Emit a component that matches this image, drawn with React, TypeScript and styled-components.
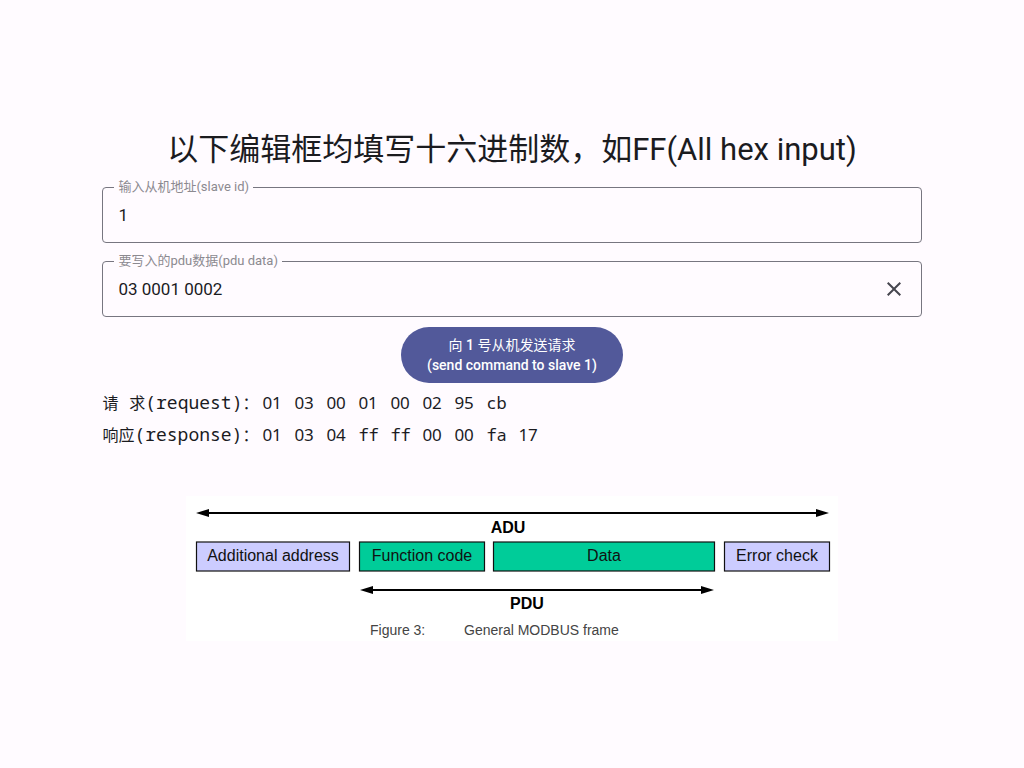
import React, { useState } from "react";
import styled, { createGlobalStyle } from "styled-components";

const GlobalStyle = createGlobalStyle`
  *, *::before, *::after { box-sizing: border-box; }
  body {
    margin: 0;
    background: #fffbff;
    color: #1b1b1f;
    font-family: Roboto, "Noto Sans CJK SC", sans-serif;
  }
`;

const Page = styled.main`
  min-height: 100vh;
  padding: 0 10%;
  display: flex;
  flex-direction: column;
  justify-content: center;
`;

const Title = styled.h1`
  margin: 0 0 6px;
  font-size: 31px;
  line-height: 46px;
  font-weight: 400;
  text-align: center;
`;

const Form = styled.form`
  display: flex;
  flex-direction: column;
  gap: 10px;
`;

const Field = styled.fieldset`
  margin: 0;
  min-width: 0;
  padding: 0 11px 7px;
  border: 1px solid #777680;
  border-radius: 4px;
`;

const Legend = styled.legend`
  padding: 0 4px;
  font-size: 13px;
  line-height: 16px;
  color: #8c8a90;
`;

const FieldBody = styled.div`
  display: flex;
  align-items: center;
`;

const Input = styled.input`
  flex: 1;
  min-width: 0;
  height: 40px;
  padding: 0 4px;
  border: 0;
  outline: 0;
  background: transparent;
  font: inherit;
  font-size: 17px;
  color: inherit;
`;

const ClearButton = styled.button`
  width: 32px;
  height: 32px;
  padding: 4px;
  border: 0;
  background: transparent;
  color: #46464f;
  cursor: pointer;
`;

const SendButton = styled.button`
  align-self: center;
  padding: 8px 26px;
  border: 0;
  border-radius: 28px;
  background: #52599a;
  color: #fff;
  font: inherit;
  font-size: 14px;
  line-height: 20px;
  font-weight: 500;
  cursor: pointer;
`;

const Regular = styled.span`
  font-weight: 400;
`;

const Log = styled.section`
  margin-top: 3px;
`;

const Line = styled.div`
  display: flex;
  align-items: baseline;
  height: 32px;
  font-family: "Noto Sans Mono", "DejaVu Sans Mono", "Noto Sans CJK SC", monospace;
  font-size: 18px;
  line-height: 32px;
`;

const LineLabel = styled.span`
  width: 160px;
  white-space: nowrap;
`;

const Han = styled.span`
  font-family: "Noto Sans CJK SC", sans-serif;
  font-size: 16px;
`;

const Byte = styled.span<{ $numeric: boolean }>`
  width: 32px;
  font-family: ${(p) => (p.$numeric ? '"Noto Sans", sans-serif' : "inherit")};
  font-size: 17px;
`;

const Figure = styled.figure`
  margin: 46px auto 0;
  width: 100%;
  max-width: 652px;
  background: #fff;
`;

const Drawing = styled.svg`
  display: block;
  width: 100%;
  font-family: "Liberation Sans", Arial, sans-serif;
`;

function Bytes({ value }: { value: string }) {
  return (
    <>
      {value.split(" ").map((byte, i) => (
        <Byte key={i} $numeric={/^\d+$/.test(byte)}>{byte} </Byte>
      ))}
    </>
  );
}

function Arrow({ from, to, y }: { from: number; to: number; y: number }) {
  return (
    <g>
      <path d={`M${from + 10} ${y}H${to - 10}`} stroke="#000" strokeWidth="2" />
      <path d={`M${from} ${y}l13 -4v8zM${to} ${y}l-13 -4v8z`} fill="#000" />
    </g>
  );
}

function Block({ x, width, fill, text }: { x: number; width: number; fill: string; text: string }) {
  return (
    <g>
      <rect x={x + 0.5} y="46" width={width - 1} height="29" fill={fill} stroke="#111" strokeWidth="1.2" />
      <text x={x + width / 2} y="65" fontSize="16" textAnchor="middle" fill="#111">{text}</text>
    </g>
  );
}

export default function App() {
  const [slave, setSlave] = useState("1");
  const [pdu, setPdu] = useState("03 0001 0002");
  return (
    <Page>
      <GlobalStyle />
      <Title>以下编辑框均填写十六进制数，如FF(All hex input)</Title>
      <Form onSubmit={(e) => e.preventDefault()}>
        <Field>
          <Legend><label htmlFor="slave">输入从机地址(slave id)</label></Legend>
          <FieldBody>
            <Input id="slave" value={slave} onChange={(e) => setSlave(e.target.value)} />
          </FieldBody>
        </Field>
        <Field>
          <Legend><label htmlFor="pdu">要写入的pdu数据(pdu data)</label></Legend>
          <FieldBody>
            <Input id="pdu" value={pdu} onChange={(e) => setPdu(e.target.value)} />
            <ClearButton type="button" aria-label="Clear" onClick={() => setPdu("")}>
              <svg width="24" height="24" viewBox="0 0 24 24" fill="currentColor" aria-hidden="true">
                <path d="M19 6.41 17.59 5 12 10.59 6.41 5 5 6.41 10.59 12 5 17.59 6.41 19 12 13.41 17.59 19 19 17.59 13.41 12z" />
              </svg>
            </ClearButton>
          </FieldBody>
        </Field>
        <SendButton type="submit">
          <Regular>向</Regular> {slave} <Regular>号从机发送请求</Regular>
          <br />
          (send command to slave {slave})
        </SendButton>
      </Form>
      <Log>
        <Line>
          <LineLabel><Han>请</Han> <Han>求</Han>(request)<Han>：</Han></LineLabel>
          <Bytes value="01 03 00 01 00 02 95 cb" />
        </Line>
        <Line>
          <LineLabel><Han>响应</Han>(response)<Han>：</Han></LineLabel>
          <Bytes value="01 03 04 ff ff 00 00 fa 17" />
        </Line>
      </Log>
      <Figure>
        <Drawing viewBox="0 0 652 145" role="img" aria-label="General MODBUS frame">
          <Arrow from={10} to={643} y={17} />
          <text x="322" y="37" fontSize="16" fontWeight="700" textAnchor="middle">ADU</text>
          <Block x={10} width={154} fill="#ccccff" text="Additional address" />
          <Block x={173} width={126} fill="#00cc99" text="Function code" />
          <Block x={307} width={222} fill="#00cc99" text="Data" />
          <Block x={538} width={106} fill="#ccccff" text="Error check" />
          <Arrow from={174} to={528} y={94} />
          <text x="341" y="113" fontSize="16" fontWeight="700" textAnchor="middle">PDU</text>
          <text x="184" y="139" fontSize="14" fill="#444">Figure 3:</text>
          <text x="278" y="139" fontSize="14" fill="#444">General MODBUS frame</text>
        </Drawing>
      </Figure>
    </Page>
  );
}
